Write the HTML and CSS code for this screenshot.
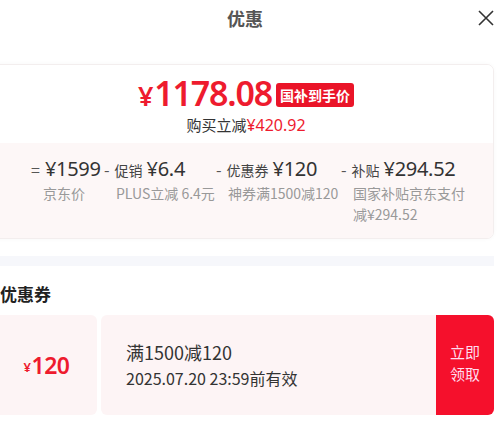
FILE: index.html
```html
<!DOCTYPE html>
<html lang="zh-CN">
<head>
    <meta charset="utf-8">
    <title>优惠</title>
    <link rel="stylesheet" href="styles.css">
</head>
<body>
    <div class="sheet">
        <div class="top">
            <h1>优惠</h1>
            <svg class="close" width="18" height="18" viewBox="0 0 18 18">
                <path d="M2 2 L16 16 M16 2 L2 16" stroke="#333" stroke-width="1.6" fill="none"/>
            </svg>
        </div>

        <div class="price-card">
            <div class="price-head">
                <div class="price-line">
                    <span class="price"><span class="yen">¥</span>1178.08</span>
                    <span class="badge">国补到手价</span>
                </div>
                <div class="saved">购买立减<span class="red">¥420.92</span></div>
            </div>
            <div class="breakdown">
                <div class="item w0">
                    <div class="val"><span class="op">=</span><span class="num">¥1599</span></div>
                    <div class="lbl">京东价</div>
                </div>
                <div class="item w1">
                    <div class="val"><span class="op">-</span><span class="tag">促销</span><span class="num">¥6.4</span></div>
                    <div class="lbl">PLUS立减 6.4元</div>
                </div>
                <div class="item w2">
                    <div class="val"><span class="op">-</span><span class="tag">优惠券</span><span class="num">¥120</span></div>
                    <div class="lbl">神券满1500减120</div>
                </div>
                <div class="item">
                    <div class="val"><span class="op">-</span><span class="tag">补贴</span><span class="num">¥294.52</span></div>
                    <div class="lbl">国家补贴京东支付<br>减¥294.52</div>
                </div>
            </div>
        </div>

        <div class="band"></div>

        <h2>优惠券</h2>
        <div class="coupon">
            <div class="c-left"><span class="c-yen">¥</span>120</div>
            <div class="c-body">
                <div class="c-title">满1500减120</div>
                <div class="c-date">2025.07.20 23:59前有效</div>
            </div>
            <div class="c-btn">
                <span>立即</span>
                <span>领取</span>
            </div>
        </div>
    </div>
</body>
</html>
```

FILE: styles.css
```css
body{
    margin: 0;
    background: #fff;
    font-family: "Noto Sans CJK SC", "Noto Sans", sans-serif;
    color: #333;
    width: 500px;
    height: 430px;
    overflow: hidden;
}
.sheet{
    margin-left: -12px;
    margin-right: 6px;
}
.top{
    height: 36px;
    display: flex;
    align-items: center;
    justify-content: center;
    position: relative;
}
h1{
    margin: 0;
    font-size: 18px;
    font-weight: bold;
    color: #555;
    padding-left: 8px;
}
.close{
    position: absolute;
    right: -1px;
    top: 9px;
}
.price-card{
    margin-top: 28px;
    border: 1px solid #f3eeee;
    border-radius: 7px;
    overflow: hidden;
    box-shadow: 0 0 4px rgba(0,0,0,0.03);
}
.price-head{
    background: #fff;
    height: 78px;
    display: flex;
    flex-direction: column;
    align-items: center;
    padding-left: 10px;
}
.price-line{
    display: flex;
    align-items: center;
    gap: 4px;
    margin-top: 9px;
    height: 40px;
}
.price{
    color: #ee1b2e;
    font-family: "Noto Sans", sans-serif;
    font-weight: 600;
    font-size: 34px;
    letter-spacing: -1.2px;
    line-height: 40px;
}
.yen{
    font-size: 27px;
    margin-right: 2px;
}
.badge{
    background: #ea1428;
    color: #fff;
    font-size: 14px;
    font-weight: bold;
    border-radius: 3px;
    padding: 0 4px;
    height: 24px;
    line-height: 24px;
    margin-top: 2px;
}
.saved{
    font-size: 15px;
    color: #333;
    line-height: 22px;
    margin-left: 0;
}
.red{
    color: #ee1b2e;
    font-family: "Noto Sans", sans-serif;
    font-size: 16px;
}
.breakdown{
    background: #fdf7f7;
    height: 95px;
    display: flex;
    padding-left: 42px;
    padding-top: 12px;
    box-sizing: border-box;
}
.item{
    display: flex;
    flex-direction: column;
}
.w0{ width: 73px; }
.w1{ width: 112px; }
.w2{ width: 125px; }
.val{
    display: flex;
    align-items: baseline;
    height: 28px;
    white-space: nowrap;
}
.op{
    font-size: 16px;
    color: #555;
    margin-right: 5px;
}
.tag{
    font-size: 14px;
    color: #444;
    margin-right: 4px;
}
.num{
    font-family: "Noto Sans", sans-serif;
    font-size: 20px;
    letter-spacing: -0.3px;
    color: #333;
}
.lbl{
    font-size: 14px;
    color: #999;
    line-height: 21px;
    padding-left: 12px;
    white-space: nowrap;
}
.band{
    height: 10px;
    background: #f6f7fb;
    margin-top: 17px;
}
h2{
    margin: 17px 0 0 12px;
    font-size: 17px;
    font-weight: bold;
    color: #222;
    line-height: 22px;
}
.coupon{
    display: flex;
    margin-top: 10px;
    height: 100px;
    gap: 4px;
}
.c-left{
    width: 109px;
    background: #fdf4f5;
    border-radius: 6px;
    display: flex;
    align-items: center;
    justify-content: center;
    color: #ee1b2e;
    font-family: "Noto Sans", sans-serif;
    font-weight: 600;
    font-size: 23px;
    letter-spacing: -0.5px;
    padding-left: 8px;
    box-sizing: border-box;
}
.c-yen{
    font-size: 13px;
    margin-right: 1px;
    margin-top: 4px;
}
.c-body{
    flex: 1;
    background: #fdf4f5;
    border-radius: 6px 0 0 6px;
    padding-left: 25px;
    display: flex;
    flex-direction: column;
    justify-content: center;
}
.c-title{
    font-size: 18px;
    color: #333;
    line-height: 26px;
}
.c-date{
    font-size: 16px;
    color: #333;
    line-height: 26px;
}
.c-btn{
    width: 58px;
    margin-left: -4px;
    background: #f5102c;
    border-radius: 0 6px 6px 0;
    color: #fde;
    font-size: 15px;
    line-height: 22px;
    display: flex;
    flex-direction: column;
    align-items: center;
    justify-content: center;
    padding-bottom: 4px;
    box-sizing: border-box;
}
```
